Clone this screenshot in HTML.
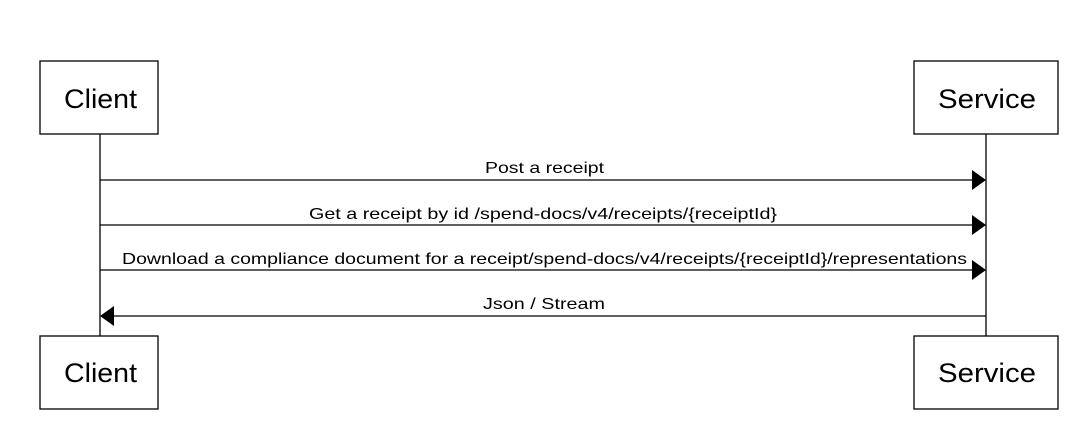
<!DOCTYPE html>
<html><head><style>body{margin:0;background:#fff}</style></head><body>
<svg width="1080" height="416" xmlns="http://www.w3.org/2000/svg" font-family="Liberation Sans, sans-serif">
<rect width="1080" height="416" fill="#fff"/>
<g stroke="#000" stroke-width="1.3" fill="#fff">
<line x1="100" y1="134" x2="100" y2="336"/>
<line x1="986" y1="134" x2="986" y2="336"/>
<rect x="40" y="61" width="118" height="73"/>
<rect x="914" y="61" width="144" height="73"/>
<rect x="40" y="336" width="118" height="73"/>
<rect x="914" y="336" width="144" height="73"/>
<line x1="100" y1="180" x2="974" y2="180"/>
<line x1="100" y1="225" x2="974" y2="225"/>
<line x1="100" y1="270" x2="974" y2="270"/>
<line x1="112" y1="316" x2="986" y2="316"/>
</g>
<g fill="#000">
<polygon points="972,170 986,180 972,190"/>
<polygon points="972,215 986,225 972,235"/>
<polygon points="972,260 986,270 972,280"/>
<polygon points="114,306 100,316 114,326"/>
</g>
<g font-size="27" fill="#000" lengthAdjust="spacingAndGlyphs">
<text x="64" y="108" textLength="73" lengthAdjust="spacingAndGlyphs">Client</text>
<text x="938" y="108" textLength="98" lengthAdjust="spacingAndGlyphs">Service</text>
<text x="64" y="382" textLength="73" lengthAdjust="spacingAndGlyphs">Client</text>
<text x="938" y="382" textLength="98" lengthAdjust="spacingAndGlyphs">Service</text>
</g>
<g font-size="16" fill="#000">
<text x="485" y="173" textLength="119" lengthAdjust="spacingAndGlyphs">Post a receipt</text>
<text x="309" y="219" textLength="468" lengthAdjust="spacingAndGlyphs">Get a receipt by id /spend-docs/v4/receipts/{receiptId}</text>
<text x="122" y="264" textLength="845" lengthAdjust="spacingAndGlyphs">Download a compliance document for a receipt/spend-docs/v4/receipts/{receiptId}/representations</text>
<text x="483" y="309" textLength="122" lengthAdjust="spacingAndGlyphs">Json / Stream</text>
</g>
</svg>
</body></html>
